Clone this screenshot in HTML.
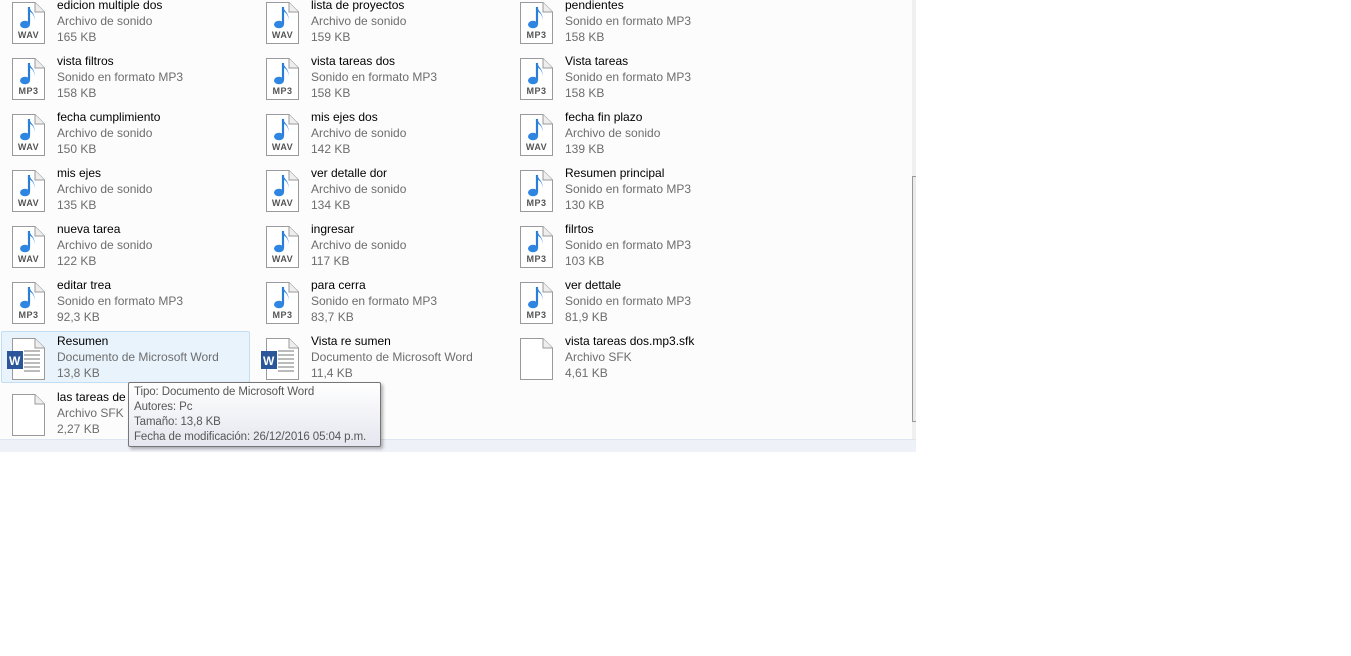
<!DOCTYPE html>
<html><head><meta charset="utf-8"><style>
body{margin:0;width:1351px;height:656px;background:#fff;position:relative;overflow:hidden;font-family:"Liberation Sans",sans-serif;font-size:12px}
.panel{position:absolute;left:0;top:0;width:912px;height:439px;background:#fcfcfc}
.sb{position:absolute;left:912px;top:0;width:4px;height:439px;background:#f0f0f0}
.thumb{position:absolute;left:912px;top:176px;width:3px;height:244px;border:1px solid #999;border-right:none;background:#eaeaea}
.strip{position:absolute;left:0;top:439px;width:916px;height:12px;background:#eef1f8;border-top:1px solid #dfe5ef}
.it{position:absolute;width:240px;height:52px}
.it svg{position:absolute;left:11px;top:2px}
.it .t{position:absolute;left:57px;top:-3px;line-height:16px;white-space:nowrap}
.n{color:#000}.d{color:#6d6d6d}
.lab{position:absolute;left:12px;top:30px;width:33px;text-align:center;font-size:9px;font-weight:bold;color:#555;letter-spacing:.5px}
.sel{position:absolute;left:1px;top:331px;width:247px;height:50px;background:#e8f3fc;border:1px solid #c3def3;border-radius:2px}
.tip{position:absolute;left:128px;top:382px;width:253px;height:65px;border:1px solid #767676;border-radius:2px;background:linear-gradient(#fff,#e5e6ef);box-shadow:2px 2px 3px rgba(0,0,0,.3);line-height:15px;color:#575757;padding:2px 0 0 5px;box-sizing:border-box;white-space:nowrap;font-size:11.5px;letter-spacing:-.1px}
</style></head><body>
<svg width="0" height="0" style="position:absolute"><defs>
<g id="pg"><path d="M1.5 .5H24L33.5 10V41.5H1.5Z" fill="#fff" stroke="#9a9a9a"/><path d="M24 .5V10H33.5" fill="#eee" stroke="#9a9a9a"/></g>
<g id="note"><use href="#pg"/><path d="M18 5V22" stroke="#2a7cd6" stroke-width="2.2"/><ellipse cx="14" cy="22.5" rx="5" ry="3.8" fill="#2f86e0"/><path d="M18 4C19 10 25 11 23 18C24 12 20 11 18.5 9Z" fill="#2f86e0"/></g>
<g id="word"><use href="#pg"/><path d="M13 13h16M13 17h16M13 21h16M13 25h16M13 29h16M13 33h16" stroke="#777"/><rect x="-4" y="13" width="16" height="18" fill="#2b579a"/><text x="-2" y="27" fill="#fff" font-size="12" font-weight="bold" font-family="Liberation Sans">W</text></g>
</defs></svg>
<div class="panel"></div>
<div class="sb"></div><div class="thumb"></div><div class="strip"></div>
<div class="sel"></div>

<div class="it" style="left:0;top:0"><svg width="40" height="44" overflow="visible"><use href="#note"/></svg><div class="lab">WAV</div><div class="t"><div class="n">edicion multiple dos</div><div class="d">Archivo de sonido</div><div class="d">165 KB</div></div></div>
<div class="it" style="left:254px;top:0"><svg width="40" height="44"><use href="#note"/></svg><div class="lab">WAV</div><div class="t"><div class="n">lista de proyectos</div><div class="d">Archivo de sonido</div><div class="d">159 KB</div></div></div>
<div class="it" style="left:508px;top:0"><svg width="40" height="44"><use href="#note"/></svg><div class="lab">MP3</div><div class="t"><div class="n">pendientes</div><div class="d">Sonido en formato MP3</div><div class="d">158 KB</div></div></div>

<div class="it" style="left:0;top:56px"><svg width="40" height="44"><use href="#note"/></svg><div class="lab">MP3</div><div class="t"><div class="n">vista filtros</div><div class="d">Sonido en formato MP3</div><div class="d">158 KB</div></div></div>
<div class="it" style="left:254px;top:56px"><svg width="40" height="44"><use href="#note"/></svg><div class="lab">MP3</div><div class="t"><div class="n">vista tareas dos</div><div class="d">Sonido en formato MP3</div><div class="d">158 KB</div></div></div>
<div class="it" style="left:508px;top:56px"><svg width="40" height="44"><use href="#note"/></svg><div class="lab">MP3</div><div class="t"><div class="n">Vista tareas</div><div class="d">Sonido en formato MP3</div><div class="d">158 KB</div></div></div>

<div class="it" style="left:0;top:112px"><svg width="40" height="44"><use href="#note"/></svg><div class="lab">WAV</div><div class="t"><div class="n">fecha cumplimiento</div><div class="d">Archivo de sonido</div><div class="d">150 KB</div></div></div>
<div class="it" style="left:254px;top:112px"><svg width="40" height="44"><use href="#note"/></svg><div class="lab">WAV</div><div class="t"><div class="n">mis ejes dos</div><div class="d">Archivo de sonido</div><div class="d">142 KB</div></div></div>
<div class="it" style="left:508px;top:112px"><svg width="40" height="44"><use href="#note"/></svg><div class="lab">WAV</div><div class="t"><div class="n">fecha fin plazo</div><div class="d">Archivo de sonido</div><div class="d">139 KB</div></div></div>

<div class="it" style="left:0;top:168px"><svg width="40" height="44"><use href="#note"/></svg><div class="lab">WAV</div><div class="t"><div class="n">mis ejes</div><div class="d">Archivo de sonido</div><div class="d">135 KB</div></div></div>
<div class="it" style="left:254px;top:168px"><svg width="40" height="44"><use href="#note"/></svg><div class="lab">WAV</div><div class="t"><div class="n">ver detalle dor</div><div class="d">Archivo de sonido</div><div class="d">134 KB</div></div></div>
<div class="it" style="left:508px;top:168px"><svg width="40" height="44"><use href="#note"/></svg><div class="lab">MP3</div><div class="t"><div class="n">Resumen principal</div><div class="d">Sonido en formato MP3</div><div class="d">130 KB</div></div></div>

<div class="it" style="left:0;top:224px"><svg width="40" height="44"><use href="#note"/></svg><div class="lab">WAV</div><div class="t"><div class="n">nueva tarea</div><div class="d">Archivo de sonido</div><div class="d">122 KB</div></div></div>
<div class="it" style="left:254px;top:224px"><svg width="40" height="44"><use href="#note"/></svg><div class="lab">WAV</div><div class="t"><div class="n">ingresar</div><div class="d">Archivo de sonido</div><div class="d">117 KB</div></div></div>
<div class="it" style="left:508px;top:224px"><svg width="40" height="44"><use href="#note"/></svg><div class="lab">MP3</div><div class="t"><div class="n">filrtos</div><div class="d">Sonido en formato MP3</div><div class="d">103 KB</div></div></div>

<div class="it" style="left:0;top:280px"><svg width="40" height="44"><use href="#note"/></svg><div class="lab">MP3</div><div class="t"><div class="n">editar trea</div><div class="d">Sonido en formato MP3</div><div class="d">92,3 KB</div></div></div>
<div class="it" style="left:254px;top:280px"><svg width="40" height="44"><use href="#note"/></svg><div class="lab">MP3</div><div class="t"><div class="n">para cerra</div><div class="d">Sonido en formato MP3</div><div class="d">83,7 KB</div></div></div>
<div class="it" style="left:508px;top:280px"><svg width="40" height="44"><use href="#note"/></svg><div class="lab">MP3</div><div class="t"><div class="n">ver dettale</div><div class="d">Sonido en formato MP3</div><div class="d">81,9 KB</div></div></div>

<div class="it" style="left:0;top:336px"><svg width="40" height="44" overflow="visible"><use href="#word"/></svg><div class="t"><div class="n">Resumen</div><div class="d">Documento de Microsoft Word</div><div class="d">13,8 KB</div></div></div>
<div class="it" style="left:254px;top:336px"><svg width="40" height="44" overflow="visible"><use href="#word"/></svg><div class="t"><div class="n">Vista re sumen</div><div class="d">Documento de Microsoft Word</div><div class="d">11,4 KB</div></div></div>
<div class="it" style="left:508px;top:336px"><svg width="40" height="44"><use href="#pg"/></svg><div class="t"><div class="n">vista tareas dos.mp3.sfk</div><div class="d">Archivo SFK</div><div class="d">4,61 KB</div></div></div>

<div class="it" style="left:0;top:392px"><svg width="40" height="44"><use href="#pg"/></svg><div class="t"><div class="n">las tareas de s</div><div class="d">Archivo SFK</div><div class="d">2,27 KB</div></div></div>

<div class="tip">Tipo: Documento de Microsoft Word<br>Autores: Pc<br>Tamaño: 13,8 KB<br>Fecha de modificación: 26/12/2016 05:04 p.m.</div>
</body></html>
